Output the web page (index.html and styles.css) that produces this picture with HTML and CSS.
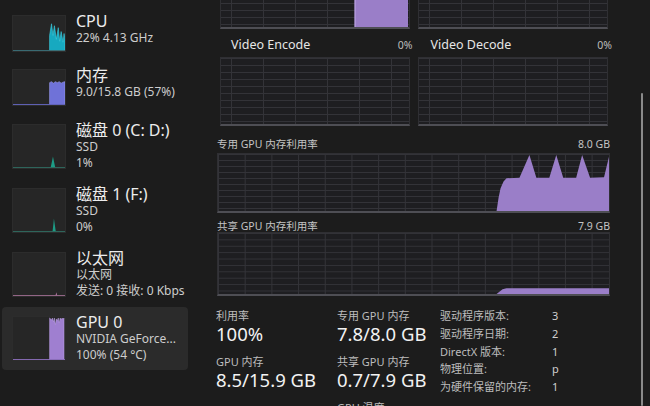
FILE: index.html
```html
<!DOCTYPE html>
<html lang="zh">
<head>
<meta charset="utf-8">
<title>任务管理器 - GPU</title>
<link rel="stylesheet" href="styles.css">
</head>
<body>
<div class="app">
  <nav class="sidebar">
    <div class="item short">
      <div class="thumb t-short">
        <svg viewBox="0 0 54 36" preserveAspectRatio="none">
          <polygon class="cpu" points="38,36 38,20 40,8 41.5,20 43,10 45,24 47,12 48.5,26 50,16 52,27 53,18 54,24 54,36"/>
          <line x1="0" y1="35.5" x2="54" y2="35.5" class="cpu-line"/>
        </svg>
      </div>
      <div class="texts">
        <div class="title">CPU</div>
        <div class="sub">22% 4.13 GHz</div>
      </div>
    </div>
    <div class="item short mem-item">
      <div class="thumb t-short">
        <svg viewBox="0 0 54 36" preserveAspectRatio="none">
          <polygon class="mem" points="38,36 38,13 40,12 42,13.5 44,12 46,13 48,12 50,13.5 52,12.5 54,12 54,36"/>
          <line x1="0" y1="35.5" x2="54" y2="35.5" class="mem-line"/>
        </svg>
      </div>
      <div class="texts">
        <div class="title">内存</div>
        <div class="sub">9.0/15.8 GB (57%)</div>
      </div>
    </div>
    <div class="item">
      <div class="thumb">
        <svg viewBox="0 0 54 45" preserveAspectRatio="none">
          <polygon class="disk" points="39,45 40.5,38 41.5,33 42.5,38 44,45"/>
          <line x1="0" y1="44.5" x2="54" y2="44.5" class="disk-line"/>
        </svg>
      </div>
      <div class="texts">
        <div class="title">磁盘 0 (C: D:)</div>
        <div class="sub">SSD</div>
        <div class="sub">1%</div>
      </div>
    </div>
    <div class="item">
      <div class="thumb">
        <svg viewBox="0 0 54 45" preserveAspectRatio="none">
          <polygon class="disk" points="41,45 42,36 42.5,31 43.5,38 44.5,45"/>
          <line x1="0" y1="44.5" x2="54" y2="44.5" class="disk-line"/>
        </svg>
      </div>
      <div class="texts">
        <div class="title">磁盘 1 (F:)</div>
        <div class="sub">SSD</div>
        <div class="sub">0%</div>
      </div>
    </div>
    <div class="item">
      <div class="thumb">
        <svg viewBox="0 0 54 45" preserveAspectRatio="none">
          <polygon class="eth" points="44,45 45,41 46,45"/>
          <line x1="0" y1="44.5" x2="54" y2="44.5" class="eth-line"/>
        </svg>
      </div>
      <div class="texts">
        <div class="title">以太网</div>
        <div class="sub">以太网</div>
        <div class="sub">发送: 0 接收: 0 Kbps</div>
      </div>
    </div>
    <div class="item selected">
      <div class="thumb">
        <svg viewBox="0 0 54 45" preserveAspectRatio="none">
          <polygon class="gpu" points="38,45 38,1 40,3 41,1 42,5 43,1 44,8 45,2 46,4 47,1 48,6 49,1 50,3 51,1 52,2 53,1 53,45"/>
          <line x1="0" y1="44.5" x2="54" y2="44.5" class="gpu-line"/>
        </svg>
      </div>
      <div class="texts">
        <div class="title">GPU 0</div>
        <div class="sub">NVIDIA GeForce...</div>
        <div class="sub">100% (54 °C)</div>
      </div>
    </div>
  </nav>

  <main class="main">
    <div class="pair top-pair">
      <div class="graph g-top">
        <svg viewBox="0 0 190 29" preserveAspectRatio="none">
          <rect x="135" y="0" width="54" height="29" class="fill"/>
          <line x1="135.5" y1="0" x2="135.5" y2="29" class="edge"/>
        </svg>
      </div>
      <div class="graph g-top"></div>
    </div>
    <div class="pair labels">
      <div class="cap"><span class="cap-name">Video Encode</span><span class="cap-val">0%</span></div>
      <div class="cap"><span class="cap-name">Video Decode</span><span class="cap-val">0%</span></div>
    </div>
    <div class="pair">
      <div class="graph g-video"></div>
      <div class="graph g-video"></div>
    </div>

    <div class="mem-label first"><span>专用 GPU 内存利用率</span><span>8.0 GB</span></div>
    <div class="graph g-mem g-ded">
      <svg viewBox="0 0 393 60" preserveAspectRatio="none">
        <polygon class="fill" points="280,60 282,46 284,36 287,29 290,25.5 303,25 313,1 320,25 333,25 340,1 347,25 360,25 366,1 374,25 388,24.5 393,3 393,60"/>
      </svg>
    </div>
    <div class="mem-label second"><span>共享 GPU 内存利用率</span><span>7.9 GB</span></div>
    <div class="graph g-mem g-shr">
      <svg viewBox="0 0 393 64" preserveAspectRatio="none">
        <polygon class="fill" points="280,64 286,59 290,58 393,58 393,64"/>
      </svg>
    </div>

    <section class="stats">
      <div class="stat-cols">
        <div class="stat-col c1">
          <div class="s-label">利用率</div>
          <div class="s-value">100%</div>
          <div class="s-label">GPU 内存</div>
          <div class="s-value">8.5/15.9 GB</div>
        </div>
        <div class="stat-col c2">
          <div class="s-label">专用 GPU 内存</div>
          <div class="s-value">7.8/8.0 GB</div>
          <div class="s-label">共享 GPU 内存</div>
          <div class="s-value">0.7/7.9 GB</div>
          <div class="s-label">GPU 温度</div>
        </div>
        <dl class="props">
          <dt>驱动程序版本:</dt><dd>3</dd>
          <dt>驱动程序日期:</dt><dd>2</dd>
          <dt>DirectX 版本:</dt><dd>1</dd>
          <dt>物理位置:</dt><dd>p</dd>
          <dt>为硬件保留的内存:</dt><dd>1</dd>
        </dl>
      </div>
    </section>
  </main>
  <div class="scrollbar"></div>
</div>
</body>
</html>
```
FILE: styles.css
```css
* { box-sizing: border-box; }
html, body {
  margin: 0;
  padding: 0;
  width: 650px;
  height: 406px;
  overflow: hidden;
  background: #1c1c1c;
}
body {
  font-family: "Noto Sans", "Noto Sans CJK SC", sans-serif;
  color: #e8e8e8;
}
.app {
  display: flex;
  width: 650px;
  height: 406px;
  overflow: hidden;
}

/* Sidebar */
.sidebar {
  width: 190px;
  flex: none;
  padding-top: 6px;
}
.item {
  display: flex;
  align-items: flex-start;
  height: 64px;
  padding-top: 6px;
  margin: 0 2px;
  border-radius: 4px;
}
.item.short { height: 54px; }
.item.mem-item { height: 55px; }
.item.selected {
  background: #2b2b2b;
  height: 63px;
}
.thumb {
  width: 54px;
  height: 45px;
  margin: 3px 10px 0 10px;
  background: #262626;
  border: 1px solid #2c2c2c;
  flex: none;
}
.thumb.t-short { height: 37px; }
.thumb svg { display: block; width: 100%; height: 100%; }
.texts { min-width: 0; }
.title {
  font-size: 16px;
  line-height: 18px;
  height: 18px;
  color: #ececec;
  white-space: nowrap;
}
.sub {
  font-size: 12px;
  line-height: 16px;
  height: 16px;
  color: #cdcdcd;
  white-space: nowrap;
}
.cpu { fill: #17a9c0; stroke: #3fd0e4; stroke-width: 0.6; }
.cpu-line { stroke: #3a6d75; stroke-width: 1; }
.mem { fill: #6f72d8; stroke: #9a9cf0; stroke-width: 0.6; }
.mem-line { stroke: #6062b8; stroke-width: 1; }
.disk { fill: #1d9c86; }
.disk-line { stroke: #2f6a5f; stroke-width: 1; }
.eth { fill: #b77aa5; }
.eth-line { stroke: #9a6a8c; stroke-width: 1; }
.gpu { fill: #9f7fd0; stroke: #c1a7ea; stroke-width: 0.5; }
.gpu-line { stroke: #8a6db8; stroke-width: 1; }

/* Main */
.main {
  width: 393px;
  margin-left: 27px;
  flex: none;
}
.pair {
  display: flex;
  gap: 8px;
  padding-left: 3px;
  padding-right: 2px;
}
.pair > * { flex: 1; }
.graph {
  background-color: #1e1e21;
  background-image:
    linear-gradient(#333338 1px, transparent 1px),
    linear-gradient(90deg, #333338 1px, transparent 1px);
  background-size: 100% 7px, 32px 100%;
  background-position: 0 0, 10px 0;
  border: 1px solid #2f2f33;
  border-bottom: 2px solid #4e4e54;
}
.graph svg { display: block; width: 100%; height: 100%; }
.g-top {
  height: 29px;
  border-top: none;
  background-position: 0 3px, 10px 0;
}
.g-video { height: 69px; }
.fill { fill: #9a7ec8; }
.edge { stroke: #c0a8e6; stroke-width: 1; }

.labels { height: 28px; padding-top: 8px; padding-left: 14px; padding-right: 0; gap: 20px; }
.cap {
  display: flex;
  justify-content: space-between;
  align-items: baseline;
  line-height: 16px;
  height: 16px;
}
.cap-name { font-size: 12.5px; color: #e6e6e6; }
.cap-val { font-size: 10.5px; color: #bdbdbd; margin-right: -2px; }

.mem-label {
  display: flex;
  justify-content: space-between;
  font-size: 10.5px;
  line-height: 16px;
  color: #c4c4c4;
}
.mem-label.first { padding-top: 10px; height: 27px; }
.mem-label.second { padding-top: 5px; height: 19px; }
.g-mem {
  background-size: 100% 6px, 26.7px 100%;
  background-position: 0 0, 0 0;
}
.g-ded { height: 60px; }
.g-shr { height: 64px; background-size: 100% 6.4px, 26.7px 100%; }

/* Stats */
.stats { padding-top: 11px; margin-left: -1px; }
.stat-cols { display: flex; }
.stat-col { flex: none; padding-top: 2px; }
.c1 { width: 121px; }
.c2 { width: 103px; }
.s-label {
  font-size: 11px;
  line-height: 14px;
  height: 14px;
  color: #bdbdbd;
  white-space: nowrap;
}
.s-value {
  font-size: 18.5px;
  line-height: 22px;
  height: 22px;
  color: #f2f2f2;
  margin-bottom: 10px;
  white-space: nowrap;
}
.props {
  margin: 0;
  display: grid;
  grid-template-columns: 112px auto;
  grid-auto-rows: 17.75px;
  font-size: 11px;
  line-height: 17.75px;
  color: #bcbcbc;
}
.props dt, .props dd { margin: 0; white-space: nowrap; overflow: hidden; }
.props dd { color: #cfcfcf; }

.scrollbar {
  position: absolute;
  left: 641px;
  top: 93px;
  width: 2px;
  height: 313px;
  background: #8a8a8a;
  border-radius: 1px;
}
```
